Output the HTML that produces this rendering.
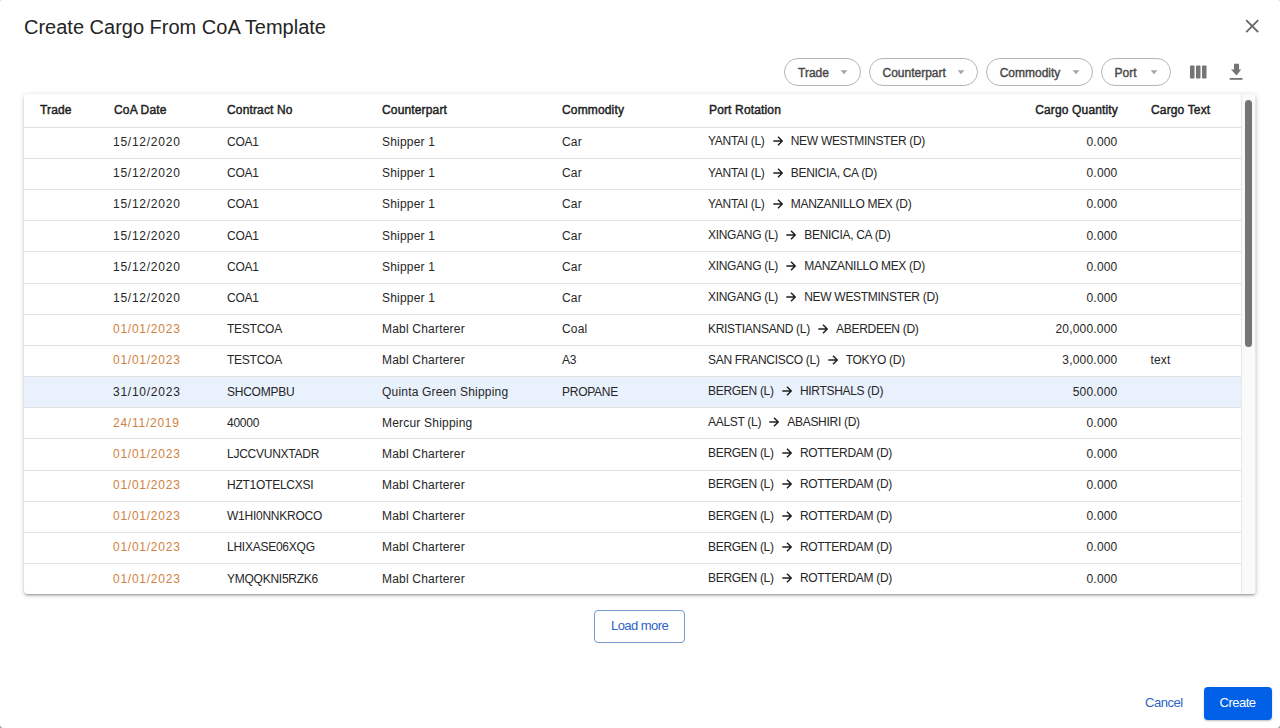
<!DOCTYPE html>
<html><head><meta charset="utf-8"><style>
*{box-sizing:border-box;margin:0;padding:0}
html,body{width:1280px;height:728px;overflow:hidden;background:linear-gradient(#c8c8c8,#a8a8a8)}
body{font-family:"Liberation Sans",sans-serif;color:#212121;position:relative}
.dlg{position:absolute;left:0;top:0;width:1280px;height:728px;background:#fff;border-radius:1.6px 1.6px 4px 4px;overflow:hidden}
.title{position:absolute;left:24px;top:16.8px;font-size:20px;line-height:20px;color:#242424;white-space:nowrap}
.close{position:absolute;left:1244px;top:18px}
.chip{position:absolute;top:58px;height:28px;border:1px solid #b5b5b5;border-radius:14px;}
.chip span{position:absolute;top:8.1px;font-size:12px;line-height:12px;color:#484848;-webkit-text-stroke:0.4px #484848;letter-spacing:0;white-space:nowrap}
.chip i{position:absolute;top:11.1px;width:8px;height:5px;background:none}
.chip i svg{display:block}
.card{position:absolute;left:24px;top:94px;width:1232px;height:500px;background:#fff;border-radius:4px;
 box-shadow:0 2px 2px rgba(0,0,0,.14),0 3px 1px -2px rgba(0,0,0,.12),0 1px 5px rgba(0,0,0,.2);overflow:hidden}
.hdr{position:absolute;left:0;top:0;width:1217px;height:33px}
.hdr span{position:absolute;top:10.3px;font-size:12px;line-height:12px;color:#222;-webkit-text-stroke:0.45px #222;letter-spacing:0.15px;white-space:nowrap}
.row{position:absolute;left:0;width:1217px;height:31px}
.ln{position:absolute;left:0;width:1217px;height:1px;background:#e0e0e0}
.hlbg{position:absolute;left:0;width:1217px;background:#e9f1fd}
.c{position:absolute;top:9px;font-size:12px;line-height:12px;color:#262626;letter-spacing:0.2px;white-space:nowrap}
.or{color:#d0823e}
.dt{letter-spacing:0.75px}
.u{letter-spacing:-0.25px}
.pn{letter-spacing:-0.3px}
.pr{top:8.4px}
.q{letter-spacing:0.2px}
.ar{display:inline-block;margin:0 8px 0 8.2px;vertical-align:-1px}
.track{position:absolute;left:1217px;top:0;width:15px;height:500px;background:#fafafa;border-left:1px solid #e8e8e8;border-right:1px solid #e8e8e8}
.thumb{position:absolute;left:3px;top:6px;width:7px;height:247px;border-radius:4px;background:#757575}
.load{position:absolute;left:594px;top:610px;width:91px;height:33px;border:1px solid #7795cf;border-radius:4px}
.load span{position:absolute;left:16px;top:8.3px;font-size:13px;line-height:13px;color:#2d63c8;letter-spacing:-0.55px;white-space:nowrap}
.cancel{position:absolute;left:1145px;top:696px;letter-spacing:-0.45px;font-size:13px;line-height:13px;color:#2d63c8;white-space:nowrap}
.create{position:absolute;left:1204px;top:687px;width:68px;height:33px;background:#0060e8;border-radius:4px;box-shadow:0 1px 2px rgba(0,0,0,.25)}
.create span{position:absolute;left:15.5px;top:9.3px;letter-spacing:-0.5px;font-size:13px;line-height:13px;color:#fff;white-space:nowrap}
</style></head><body><div class="dlg">
<div class="title">Create Cargo From CoA Template</div>
<svg class="close" width="16" height="16" viewBox="0 0 16 16"><path d="M2.2 2.2L14.2 14.2M14.2 2.2L2.2 14.2" stroke="#666" stroke-width="1.8" fill="none"/></svg>
<div class="chip" style="left:784px;width:77px"><span style="left:13px">Trade</span><i style="left:54.5px"><svg width="8" height="5" viewBox="0 0 8 5"><path d="M0.6 0.3H7.4L4 4.2Z" fill="#a5a5a5"/></svg></i></div>
<div class="chip" style="left:869px;width:109px"><span style="left:12.5px">Counterpart</span><i style="left:86.9px"><svg width="8" height="5" viewBox="0 0 8 5"><path d="M0.6 0.3H7.4L4 4.2Z" fill="#a5a5a5"/></svg></i></div>
<div class="chip" style="left:986px;width:107px"><span style="left:12.7px">Commodity</span><i style="left:84.9px"><svg width="8" height="5" viewBox="0 0 8 5"><path d="M0.6 0.3H7.4L4 4.2Z" fill="#a5a5a5"/></svg></i></div>
<div class="chip" style="left:1101px;width:70px"><span style="left:12.5px">Port</span><i style="left:47.5px"><svg width="8" height="5" viewBox="0 0 8 5"><path d="M0.6 0.3H7.4L4 4.2Z" fill="#a5a5a5"/></svg></i></div>
<svg style="position:absolute;left:1190px;top:65px" width="17" height="14" viewBox="0 0 17 14"><g fill="#757575"><rect x="0" y="0.5" width="4.5" height="13" rx="0.8"/><rect x="6" y="0.5" width="4.5" height="13" rx="0.8"/><rect x="12" y="0.5" width="4.5" height="13" rx="0.8"/></g></svg>
<svg style="position:absolute;left:1229px;top:63px" width="14" height="17" viewBox="0 0 14 17"><g fill="#757575"><path d="M5 0.7H10V6.5H12.2L7.5 12.5L2 6.5H5Z"/><rect x="0.7" y="15" width="12.8" height="1.8"/></g></svg>
<div class="card">
<div class="hdr">
<span style="left:16px">Trade</span><span style="left:90px">CoA Date</span><span style="left:203px">Contract No</span><span style="left:358px">Counterpart</span><span style="left:538px">Commodity</span><span style="left:685px">Port Rotation</span><span style="right:123px">Cargo Quantity</span><span style="left:1127px">Cargo Text</span>
</div>
<div class="hlbg" style="top:283px;height:30px"></div><div class="ln" style="top:33px"></div><div class="ln" style="top:64px"></div><div class="ln" style="top:95px"></div><div class="ln" style="top:126px"></div><div class="ln" style="top:157px"></div><div class="ln" style="top:189px"></div><div class="ln" style="top:220px"></div><div class="ln" style="top:251px"></div><div class="ln" style="top:282px"></div><div class="ln" style="top:313px"></div><div class="ln" style="top:344px"></div><div class="ln" style="top:376px"></div><div class="ln" style="top:407px"></div><div class="ln" style="top:438px"></div><div class="ln" style="top:469px"></div><div class="row" style="top:33.00px"><span class="c dt" style="left:89px">15/12/2020</span><span class="c u" style="left:203px">COA1</span><span class="c" style="left:358px">Shipper 1</span><span class="c" style="left:538px">Car</span><span class="c pr" style="left:684px"><span class="pn">YANTAI (L)</span><svg class="ar" width="10" height="10" viewBox="0 0 10 10"><path d="M0.3 5H9M5 0.8L9.2 5L5 9.2" fill="none" stroke="#212121" stroke-width="1.5"/></svg><span class="pn">NEW WESTMINSTER (D)</span></span><span class="c q" style="right:123.5px">0.000</span><span class="c" style="left:1126.4px"></span></div><div class="row" style="top:64.19px"><span class="c dt" style="left:89px">15/12/2020</span><span class="c u" style="left:203px">COA1</span><span class="c" style="left:358px">Shipper 1</span><span class="c" style="left:538px">Car</span><span class="c pr" style="left:684px"><span class="pn">YANTAI (L)</span><svg class="ar" width="10" height="10" viewBox="0 0 10 10"><path d="M0.3 5H9M5 0.8L9.2 5L5 9.2" fill="none" stroke="#212121" stroke-width="1.5"/></svg><span class="pn">BENICIA, CA (D)</span></span><span class="c q" style="right:123.5px">0.000</span><span class="c" style="left:1126.4px"></span></div><div class="row" style="top:95.38px"><span class="c dt" style="left:89px">15/12/2020</span><span class="c u" style="left:203px">COA1</span><span class="c" style="left:358px">Shipper 1</span><span class="c" style="left:538px">Car</span><span class="c pr" style="left:684px"><span class="pn">YANTAI (L)</span><svg class="ar" width="10" height="10" viewBox="0 0 10 10"><path d="M0.3 5H9M5 0.8L9.2 5L5 9.2" fill="none" stroke="#212121" stroke-width="1.5"/></svg><span class="pn">MANZANILLO MEX (D)</span></span><span class="c q" style="right:123.5px">0.000</span><span class="c" style="left:1126.4px"></span></div><div class="row" style="top:126.57px"><span class="c dt" style="left:89px">15/12/2020</span><span class="c u" style="left:203px">COA1</span><span class="c" style="left:358px">Shipper 1</span><span class="c" style="left:538px">Car</span><span class="c pr" style="left:684px"><span class="pn">XINGANG (L)</span><svg class="ar" width="10" height="10" viewBox="0 0 10 10"><path d="M0.3 5H9M5 0.8L9.2 5L5 9.2" fill="none" stroke="#212121" stroke-width="1.5"/></svg><span class="pn">BENICIA, CA (D)</span></span><span class="c q" style="right:123.5px">0.000</span><span class="c" style="left:1126.4px"></span></div><div class="row" style="top:157.76px"><span class="c dt" style="left:89px">15/12/2020</span><span class="c u" style="left:203px">COA1</span><span class="c" style="left:358px">Shipper 1</span><span class="c" style="left:538px">Car</span><span class="c pr" style="left:684px"><span class="pn">XINGANG (L)</span><svg class="ar" width="10" height="10" viewBox="0 0 10 10"><path d="M0.3 5H9M5 0.8L9.2 5L5 9.2" fill="none" stroke="#212121" stroke-width="1.5"/></svg><span class="pn">MANZANILLO MEX (D)</span></span><span class="c q" style="right:123.5px">0.000</span><span class="c" style="left:1126.4px"></span></div><div class="row" style="top:188.95px"><span class="c dt" style="left:89px">15/12/2020</span><span class="c u" style="left:203px">COA1</span><span class="c" style="left:358px">Shipper 1</span><span class="c" style="left:538px">Car</span><span class="c pr" style="left:684px"><span class="pn">XINGANG (L)</span><svg class="ar" width="10" height="10" viewBox="0 0 10 10"><path d="M0.3 5H9M5 0.8L9.2 5L5 9.2" fill="none" stroke="#212121" stroke-width="1.5"/></svg><span class="pn">NEW WESTMINSTER (D)</span></span><span class="c q" style="right:123.5px">0.000</span><span class="c" style="left:1126.4px"></span></div><div class="row" style="top:220.14px"><span class="c dt or" style="left:89px">01/01/2023</span><span class="c u" style="left:203px">TESTCOA</span><span class="c" style="left:358px">Mabl Charterer</span><span class="c" style="left:538px">Coal</span><span class="c pr" style="left:684px"><span class="pn">KRISTIANSAND (L)</span><svg class="ar" width="10" height="10" viewBox="0 0 10 10"><path d="M0.3 5H9M5 0.8L9.2 5L5 9.2" fill="none" stroke="#212121" stroke-width="1.5"/></svg><span class="pn">ABERDEEN (D)</span></span><span class="c q" style="right:123.5px">20,000.000</span><span class="c" style="left:1126.4px"></span></div><div class="row" style="top:251.33px"><span class="c dt or" style="left:89px">01/01/2023</span><span class="c u" style="left:203px">TESTCOA</span><span class="c" style="left:358px">Mabl Charterer</span><span class="c u" style="left:538px">A3</span><span class="c pr" style="left:684px"><span class="pn">SAN FRANCISCO (L)</span><svg class="ar" width="10" height="10" viewBox="0 0 10 10"><path d="M0.3 5H9M5 0.8L9.2 5L5 9.2" fill="none" stroke="#212121" stroke-width="1.5"/></svg><span class="pn">TOKYO (D)</span></span><span class="c q" style="right:123.5px">3,000.000</span><span class="c" style="left:1126.4px">text</span></div><div class="row" style="top:282.52px"><span class="c dt" style="left:89px">31/10/2023</span><span class="c u" style="left:203px">SHCOMPBU</span><span class="c" style="left:358px">Quinta Green Shipping</span><span class="c u" style="left:538px">PROPANE</span><span class="c pr" style="left:684px"><span class="pn">BERGEN (L)</span><svg class="ar" width="10" height="10" viewBox="0 0 10 10"><path d="M0.3 5H9M5 0.8L9.2 5L5 9.2" fill="none" stroke="#212121" stroke-width="1.5"/></svg><span class="pn">HIRTSHALS (D)</span></span><span class="c q" style="right:123.5px">500.000</span><span class="c" style="left:1126.4px"></span></div><div class="row" style="top:313.71px"><span class="c dt or" style="left:89px">24/11/2019</span><span class="c u" style="left:203px">40000</span><span class="c" style="left:358px">Mercur Shipping</span><span class="c" style="left:538px"></span><span class="c pr" style="left:684px"><span class="pn">AALST (L)</span><svg class="ar" width="10" height="10" viewBox="0 0 10 10"><path d="M0.3 5H9M5 0.8L9.2 5L5 9.2" fill="none" stroke="#212121" stroke-width="1.5"/></svg><span class="pn">ABASHIRI (D)</span></span><span class="c q" style="right:123.5px">0.000</span><span class="c" style="left:1126.4px"></span></div><div class="row" style="top:344.90px"><span class="c dt or" style="left:89px">01/01/2023</span><span class="c u" style="left:203px">LJCCVUNXTADR</span><span class="c" style="left:358px">Mabl Charterer</span><span class="c" style="left:538px"></span><span class="c pr" style="left:684px"><span class="pn">BERGEN (L)</span><svg class="ar" width="10" height="10" viewBox="0 0 10 10"><path d="M0.3 5H9M5 0.8L9.2 5L5 9.2" fill="none" stroke="#212121" stroke-width="1.5"/></svg><span class="pn">ROTTERDAM (D)</span></span><span class="c q" style="right:123.5px">0.000</span><span class="c" style="left:1126.4px"></span></div><div class="row" style="top:376.09px"><span class="c dt or" style="left:89px">01/01/2023</span><span class="c u" style="left:203px">HZT1OTELCXSI</span><span class="c" style="left:358px">Mabl Charterer</span><span class="c" style="left:538px"></span><span class="c pr" style="left:684px"><span class="pn">BERGEN (L)</span><svg class="ar" width="10" height="10" viewBox="0 0 10 10"><path d="M0.3 5H9M5 0.8L9.2 5L5 9.2" fill="none" stroke="#212121" stroke-width="1.5"/></svg><span class="pn">ROTTERDAM (D)</span></span><span class="c q" style="right:123.5px">0.000</span><span class="c" style="left:1126.4px"></span></div><div class="row" style="top:407.28px"><span class="c dt or" style="left:89px">01/01/2023</span><span class="c u" style="left:203px">W1HI0NNKROCO</span><span class="c" style="left:358px">Mabl Charterer</span><span class="c" style="left:538px"></span><span class="c pr" style="left:684px"><span class="pn">BERGEN (L)</span><svg class="ar" width="10" height="10" viewBox="0 0 10 10"><path d="M0.3 5H9M5 0.8L9.2 5L5 9.2" fill="none" stroke="#212121" stroke-width="1.5"/></svg><span class="pn">ROTTERDAM (D)</span></span><span class="c q" style="right:123.5px">0.000</span><span class="c" style="left:1126.4px"></span></div><div class="row" style="top:438.47px"><span class="c dt or" style="left:89px">01/01/2023</span><span class="c u" style="left:203px">LHIXASE06XQG</span><span class="c" style="left:358px">Mabl Charterer</span><span class="c" style="left:538px"></span><span class="c pr" style="left:684px"><span class="pn">BERGEN (L)</span><svg class="ar" width="10" height="10" viewBox="0 0 10 10"><path d="M0.3 5H9M5 0.8L9.2 5L5 9.2" fill="none" stroke="#212121" stroke-width="1.5"/></svg><span class="pn">ROTTERDAM (D)</span></span><span class="c q" style="right:123.5px">0.000</span><span class="c" style="left:1126.4px"></span></div><div class="row" style="top:469.66px"><span class="c dt or" style="left:89px">01/01/2023</span><span class="c u" style="left:203px">YMQQKNI5RZK6</span><span class="c" style="left:358px">Mabl Charterer</span><span class="c" style="left:538px"></span><span class="c pr" style="left:684px"><span class="pn">BERGEN (L)</span><svg class="ar" width="10" height="10" viewBox="0 0 10 10"><path d="M0.3 5H9M5 0.8L9.2 5L5 9.2" fill="none" stroke="#212121" stroke-width="1.5"/></svg><span class="pn">ROTTERDAM (D)</span></span><span class="c q" style="right:123.5px">0.000</span><span class="c" style="left:1126.4px"></span></div>
<div class="track"><div class="thumb"></div></div>
</div>
<div class="load"><span>Load more</span></div>
<div class="cancel">Cancel</div>
<div class="create"><span>Create</span></div>
</div></body></html>
